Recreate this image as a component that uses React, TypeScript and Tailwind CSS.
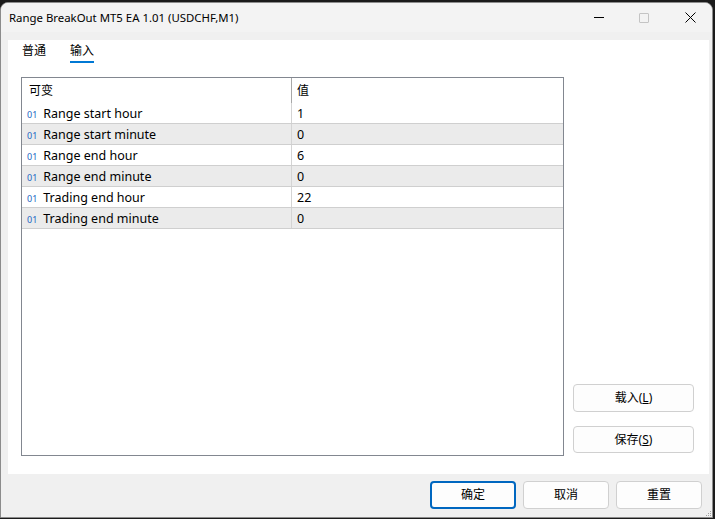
import React from "react";

type Param = {
  name: string;
  value: string;
};

const params: Param[] = [
  { name: "Range start hour", value: "1" },
  { name: "Range start minute", value: "0" },
  { name: "Range end hour", value: "6" },
  { name: "Range end minute", value: "0" },
  { name: "Trading end hour", value: "22" },
  { name: "Trading end minute", value: "0" },
];

function WinButton({
  children,
  primary = false,
  className = "",
}: {
  children: React.ReactNode;
  primary?: boolean;
  className?: string;
}) {
  return (
    <button
      className={
        "flex items-center justify-center rounded-[4px] bg-[#fdfdfd] text-[12px] text-black " +
        (primary
          ? "border-2 border-[#0067c0] "
          : "border border-[#d0d0d0] ") +
        className
      }
    >
      {children}
    </button>
  );
}

function ParamRow({ param, index }: { param: Param; index: number }) {
  return (
    <div
      className={
        "flex h-[21px] border-b border-[#cfcfcf] " +
        (index % 2 === 1 ? "bg-[#ebebeb]" : "bg-white")
      }
    >
      <div className="flex w-[270px] items-center border-r border-[#d4d4d4] pl-[5px] pt-[2px]">
        <span className="mr-[6px] text-[9px] leading-none text-[#2266c4]">01</span>
        <span className="text-[12.5px]">{param.name}</span>
      </div>
      <div className="flex flex-1 items-center pl-[5px] pt-[2px] text-[12.5px]">{param.value}</div>
    </div>
  );
}

export default function App() {
  return (
    <div className="h-[519px] w-[715px] bg-[#1b1b1b] pt-[2px] pr-[2px] pb-[1px] font-['Noto_Sans','Noto_Sans_CJK_SC',sans-serif] text-black">
      <div className="flex h-full flex-col overflow-hidden rounded-t-[8px] border border-[#8c8c8c] bg-[#f0f0f0]">
        {/* title bar */}
        <div className="flex h-[29px] items-center bg-[#f3f3f3] pl-[8px]">
          <span className="text-[11.4px]">Range BreakOut MT5 EA 1.01 (USDCHF,M1)</span>
          <div className="ml-auto flex h-full items-center">
            <div className="flex w-[46px] items-center justify-center pl-[4px]">
              <div className="h-px w-[10px] bg-black" />
            </div>
            <div className="flex w-[46px] items-center justify-center pl-[2px]">
              <div className="h-[10px] w-[10px] rounded-[1px] border border-[#c4c4c4]" />
            </div>
            <div className="flex w-[46px] items-center justify-center pl-[2px]">
              <svg width="11" height="11" viewBox="0 0 11 11">
                <path d="M0.5 0.5 L10.5 10.5 M10.5 0.5 L0.5 10.5" stroke="#000" strokeWidth="1" />
              </svg>
            </div>
          </div>
        </div>

        {/* content panel */}
        <div className="ml-[7px] mt-[8px] h-[434px] w-[701px] bg-white">
          <div className="flex h-[37px] gap-[24px] pl-[14px] pt-[2px] text-[12px]">
            <div className="h-[21px]">普通</div>
            <div className="h-[21px] border-b-2 border-[#0078d4]">输入</div>
          </div>
          <div className="flex">
            <div className="ml-[13px] h-[379px] w-[543px] border border-[#828790] bg-white">
              <div className="flex h-[25px] text-[12px]">
                <div className="flex w-[270px] items-center border-r border-[#a8a8a8] pl-[7px]">可变</div>
                <div className="flex flex-1 items-center pl-[5px]">值</div>
              </div>
              {params.map((p, i) => (
                <ParamRow key={p.name} param={p} index={i} />
              ))}
            </div>
            <div className="ml-[9px] flex flex-col gap-[14px] pt-[307px]">
              <WinButton className="h-[28px] w-[121px]">
                载入(<span className="underline">L</span>)
              </WinButton>
              <WinButton className="h-[27px] w-[121px]">
                保存(<span className="underline">S</span>)
              </WinButton>
            </div>
          </div>
        </div>

        {/* bottom bar */}
        <div className="relative flex flex-1 items-start gap-[7px] pl-[429px] pt-[7px]">
          <WinButton primary className="h-[28px] w-[86px]">确定</WinButton>
          <WinButton className="h-[28px] w-[86px]">取消</WinButton>
          <WinButton className="h-[28px] w-[86px]">重置</WinButton>
          <div className="absolute bottom-[1px] right-[1px] grid grid-cols-3 gap-[1px]">
            <span />
            <span />
            <span className="h-[1px] w-[1px] bg-[#a0a0a0]" />
            <span />
            <span className="h-[1px] w-[1px] bg-[#a0a0a0]" />
            <span className="h-[1px] w-[1px] bg-[#a0a0a0]" />
            <span className="h-[1px] w-[1px] bg-[#a0a0a0]" />
            <span className="h-[1px] w-[1px] bg-[#a0a0a0]" />
            <span className="h-[1px] w-[1px] bg-[#a0a0a0]" />
          </div>
        </div>
      </div>
    </div>
  );
}
